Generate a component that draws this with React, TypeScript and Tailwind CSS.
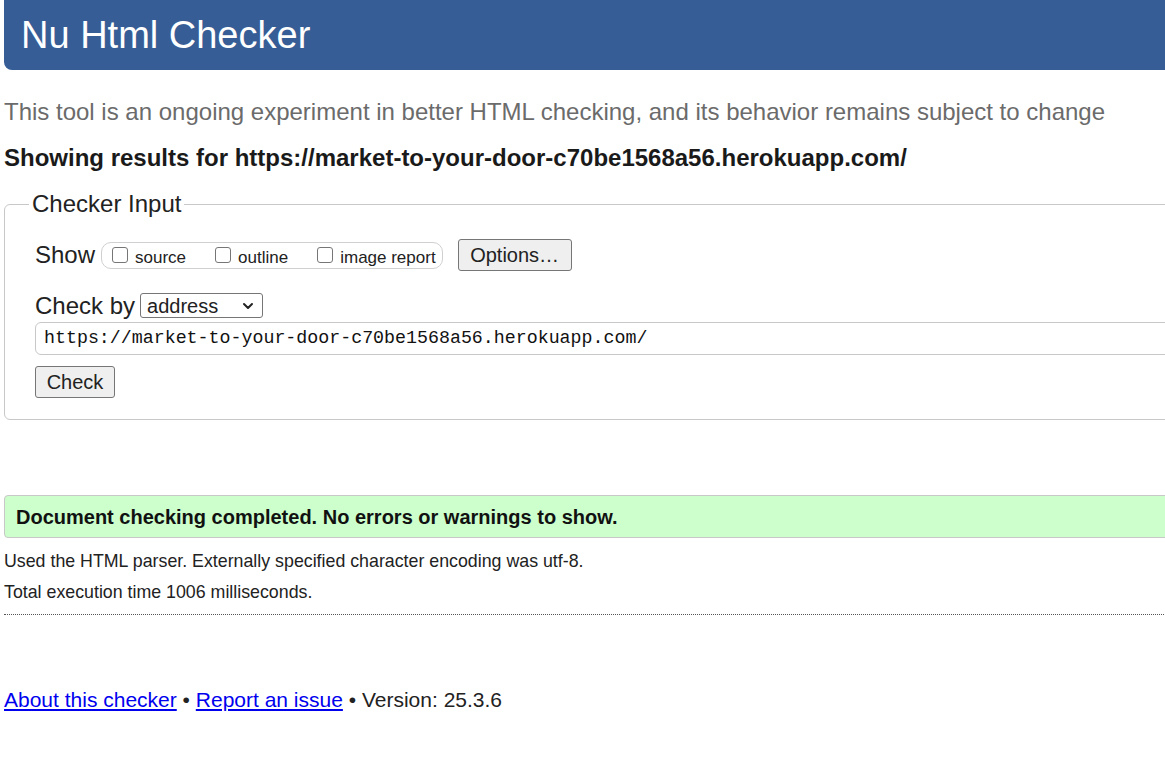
import { ChevronDown } from 'lucide-react';

const sans = { fontFamily: '"Liberation Sans", Arial, sans-serif' };

function Box({ label }: { label: string }) {
  return (
    <label className="flex items-center">
      <span className="mr-[7px] -mt-[4px] h-[16px] w-[16px] rounded-[3px] border border-[#767676] bg-white" />
      <span className="text-[17px] leading-none text-[#222]">{label}</span>
    </label>
  );
}

export default function App() {
  const url = 'https://market-to-your-door-c70be1568a56.herokuapp.com/';
  return (
    <div
      className="h-[772px] w-[1165px] overflow-hidden bg-white text-[#222]"
      style={{ fontFamily: '"Liberation Sans", Arial, sans-serif' }}
    >
      <div className="w-[1230px]">
        {/* Title bar */}
        <div className="ml-[4px] flex h-[70px] items-center rounded-bl-[8px] bg-[#365d96] pl-[17px]">
          <h1 className="text-[38px] leading-none text-white">Nu Html Checker</h1>
        </div>

        <p className="ml-[4px] mt-[28px] text-[24px] leading-[28px] text-[#6b6b6b]">
          This tool is an ongoing experiment in better HTML checking, and its behavior
          remains subject to change
        </p>

        <p className="ml-[4px] mt-[18px] text-[24px] font-bold leading-[28px] text-[#1a1a1a]">
          Showing results for {url}
        </p>

        {/* Checker input */}
        <fieldset className="ml-[4px] mt-[19px] h-[229px] rounded-[6px] border border-[#c8c8c8] px-[30px] pt-[22px]">
          <legend className="-ml-[6px] px-[3px] text-[24px] leading-[26px]">Checker Input</legend>

          <div className="flex items-center">
            <span className="mr-[6px] text-[24px] leading-none">Show</span>
            <div className="flex h-[27px] items-center rounded-[10px] border border-[#d0d0d0] pl-[10px] pr-[6px] pt-[4px]">
              <div className="flex items-center gap-[29px]">
                <Box label="source" />
                <Box label="outline" />
                <Box label="image report" />
              </div>
            </div>
            <button className="ml-[15px] h-[32px] w-[114px] rounded-[3px] border border-[#767676] bg-[#efefef] text-[20px] leading-none">
              Options…
            </button>
          </div>

          <div className="mt-[22px] flex items-center">
            <span className="mr-[5px] text-[24px] leading-none">Check by</span>
            <div className="flex h-[25px] w-[123px] items-center justify-between rounded-[3px] border border-[#767676] bg-white pl-[6px] pr-[6px]">
              <span className="text-[20px] leading-none">address</span>
              <ChevronDown className="h-[16px] w-[16px]" strokeWidth={3} />
            </div>
          </div>

          <div className="mt-[4px] flex h-[33px] items-center rounded-l-[6px] border border-[#c8c8c8] pl-[8px]">
            <span
              className="text-[18.3px] leading-none text-[#111]"
              style={{ fontFamily: '"Liberation Mono", "DejaVu Sans Mono", monospace' }}
            >
              {url}
            </span>
          </div>

          <button className="mt-[11px] h-[32px] w-[80px] rounded-[3px] border border-[#767676] bg-[#efefef] text-[20px] leading-none">
            Check
          </button>
        </fieldset>

        {/* Result */}
        <div className="ml-[4px] mt-[75px] flex h-[43px] items-center rounded-l-[4px] border border-[#c8c8c8] bg-[#ccffcc] pl-[11px]">
          <span className="mt-[1px] text-[20px] font-bold leading-none text-[#111]">
            Document checking completed. No errors or warnings to show.
          </span>
        </div>

        <p className="ml-[4px] mt-[13px] text-[17.8px] leading-[20px]">
          Used the HTML parser. Externally specified character encoding was utf-8.
        </p>
        <p className="ml-[4px] mt-[11px] text-[17.8px] leading-[20px]">
          Total execution time 1006 milliseconds.
        </p>

        <div className="ml-[4px] mt-[12px] border-t border-dotted border-[#555]" />

        <p className="ml-[4px] mt-[73px] text-[21px] leading-[24px]" style={sans}>
          <a href="#" className="text-[#0000ee] underline">About this checker</a>
          {' • '}
          <a href="#" className="text-[#0000ee] underline">Report an issue</a>
          {' • Version: 25.3.6'}
        </p>
      </div>
    </div>
  );
}
